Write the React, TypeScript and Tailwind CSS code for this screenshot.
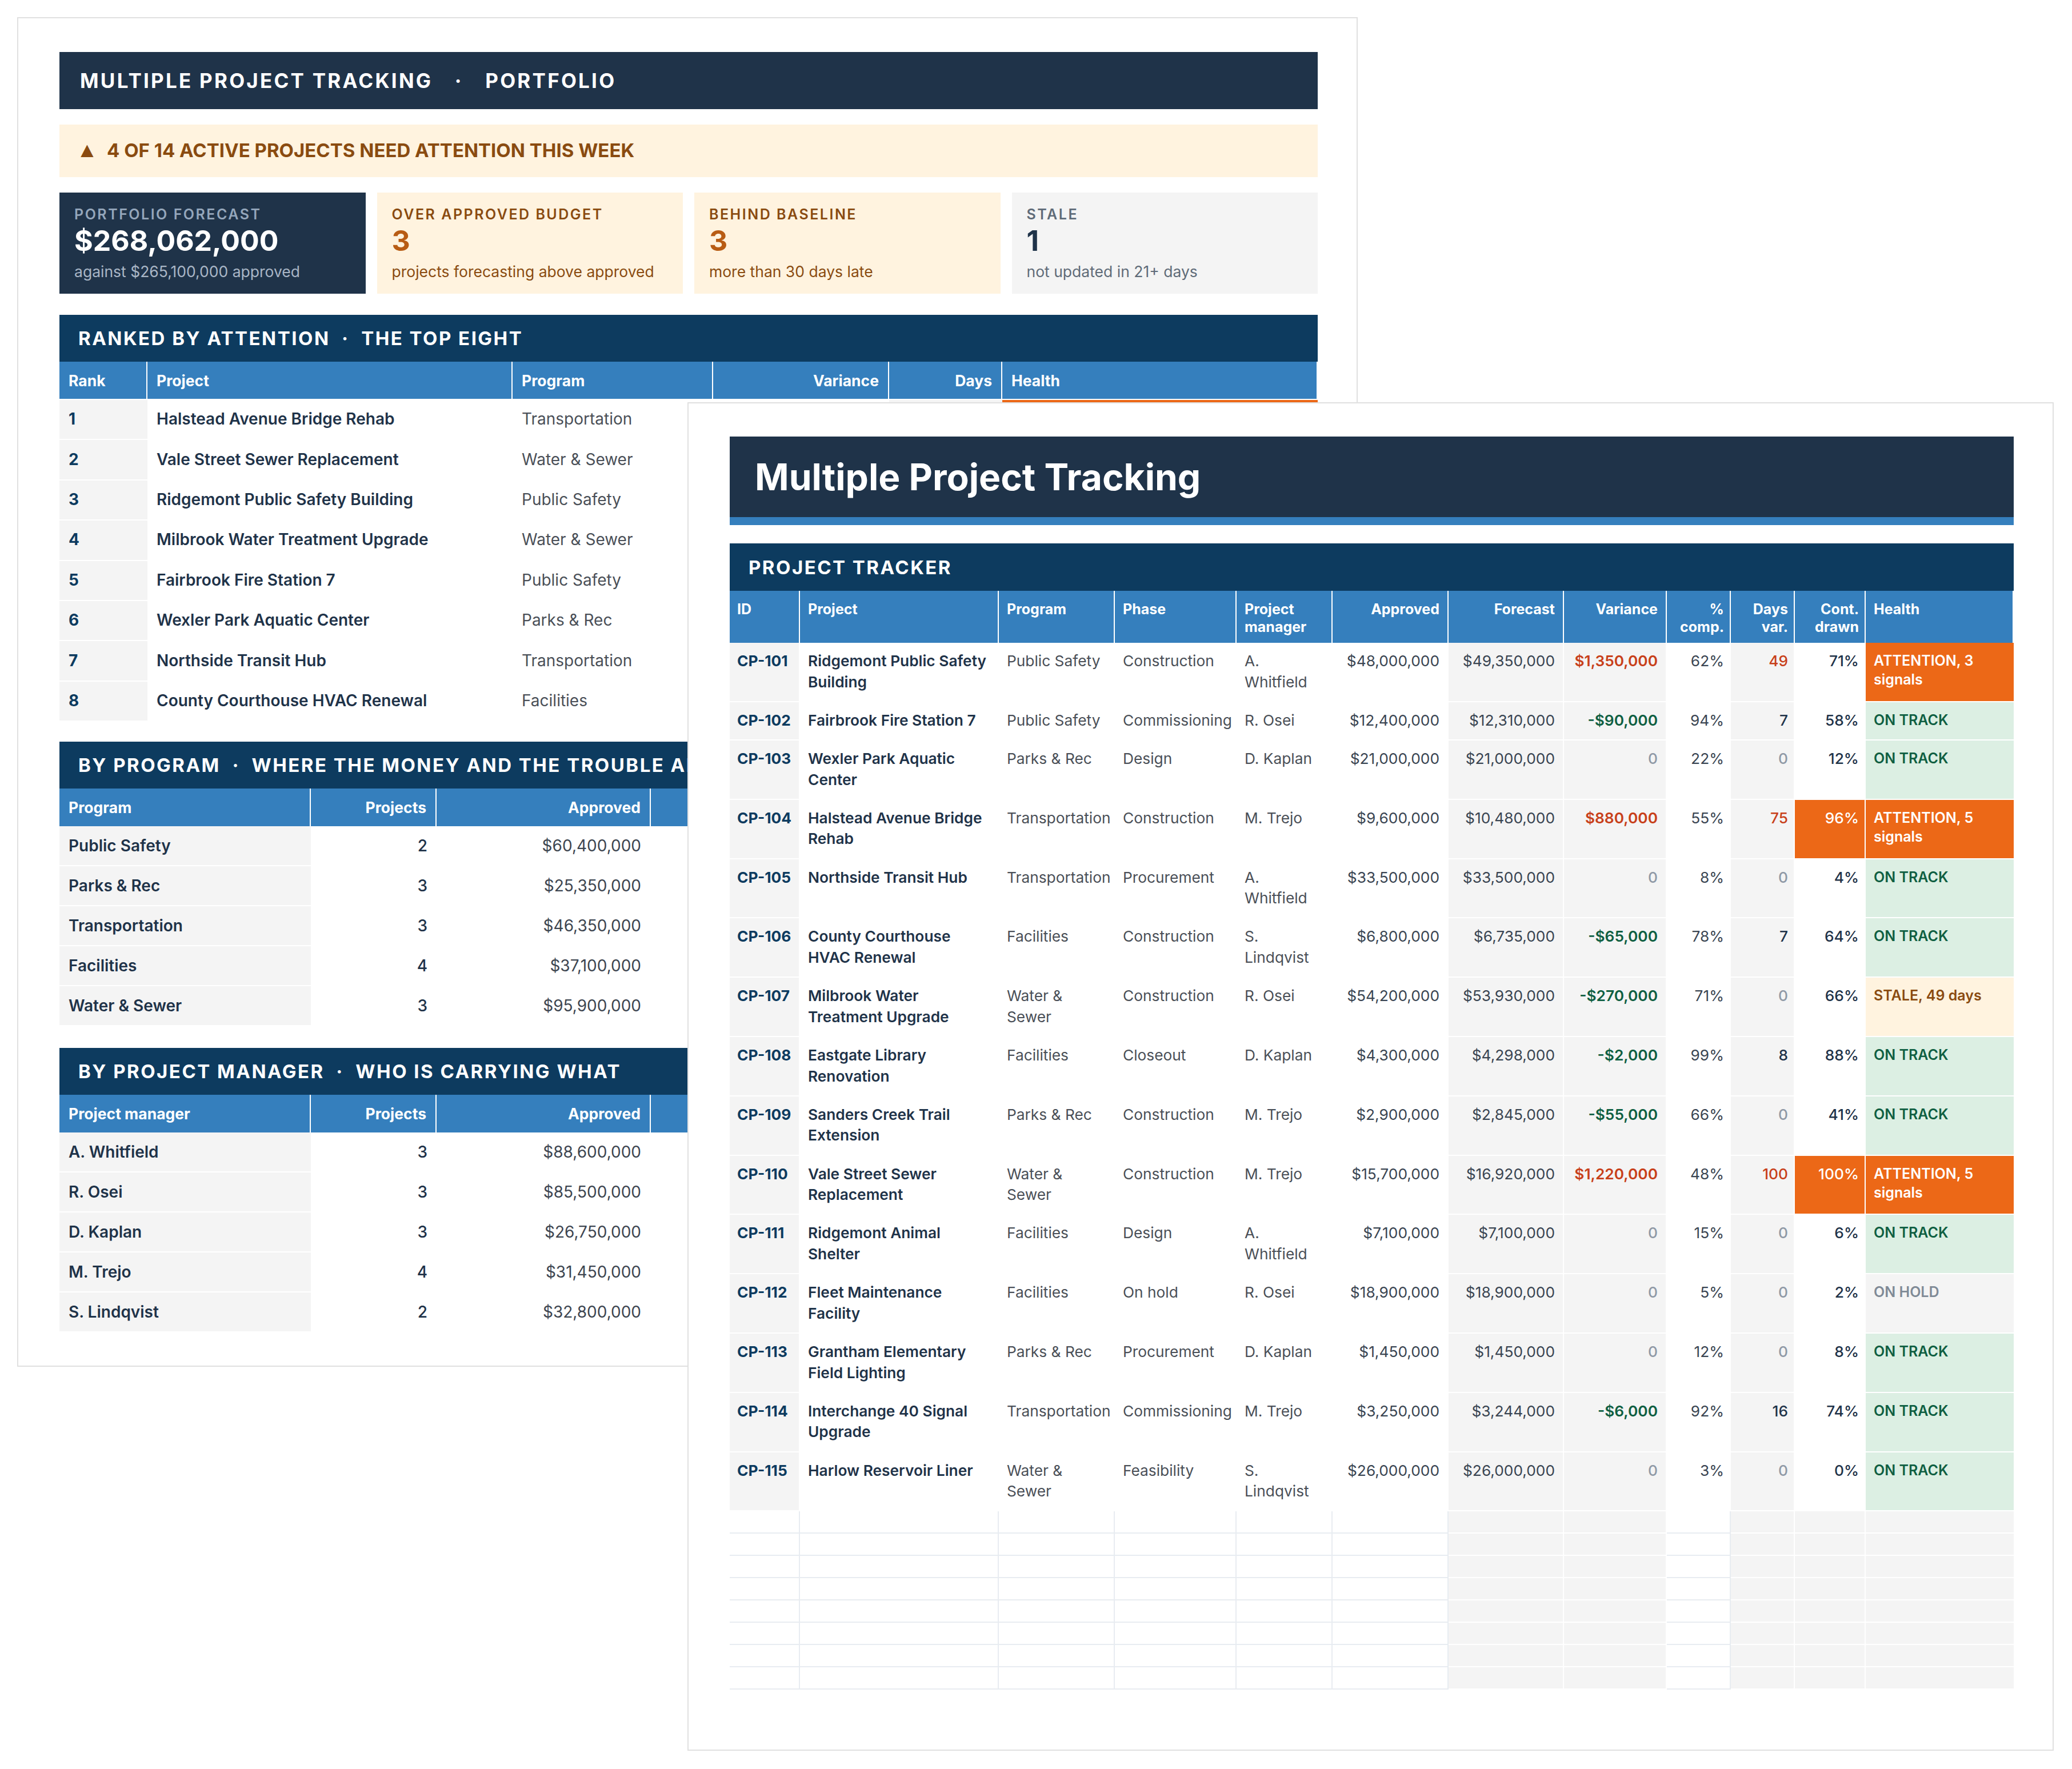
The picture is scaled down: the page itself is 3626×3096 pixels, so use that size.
import type { ReactNode } from 'react';

const FONT = "font-['Inter','Noto_Sans',sans-serif]";

type Tone = 'attention' | 'track' | 'stale' | 'hold';

const toneClass: Record<Tone, string> = {
  attention: 'bg-[#ec6817] text-white',
  track: 'bg-[#dcefe3] text-[#0f5f42]',
  stale: 'bg-[#fff3df] text-[#8a4b10]',
  hold: 'bg-[#f4f4f4] text-[#7f8a96]',
};

interface TrackerRow {
  id: string;
  project: string;
  program: string;
  phase: string;
  pm: string;
  approved: string;
  forecast: string;
  variance: string;
  comp: string;
  days: string;
  drawn: string;
  drawnHot?: boolean;
  health: string;
  tone: Tone;
}

const rows: TrackerRow[] = [
  { id: 'CP-101', project: 'Ridgemont Public Safety Building', program: 'Public Safety', phase: 'Construction', pm: 'A. Whitfield', approved: '$48,000,000', forecast: '$49,350,000', variance: '$1,350,000', comp: '62%', days: '49', drawn: '71%', health: 'ATTENTION, 3 signals', tone: 'attention' },
  { id: 'CP-102', project: 'Fairbrook Fire Station 7', program: 'Public Safety', phase: 'Commissioning', pm: 'R. Osei', approved: '$12,400,000', forecast: '$12,310,000', variance: '-$90,000', comp: '94%', days: '7', drawn: '58%', health: 'ON TRACK', tone: 'track' },
  { id: 'CP-103', project: 'Wexler Park Aquatic Center', program: 'Parks & Rec', phase: 'Design', pm: 'D. Kaplan', approved: '$21,000,000', forecast: '$21,000,000', variance: '0', comp: '22%', days: '0', drawn: '12%', health: 'ON TRACK', tone: 'track' },
  { id: 'CP-104', project: 'Halstead Avenue Bridge Rehab', program: 'Transportation', phase: 'Construction', pm: 'M. Trejo', approved: '$9,600,000', forecast: '$10,480,000', variance: '$880,000', comp: '55%', days: '75', drawn: '96%', drawnHot: true, health: 'ATTENTION, 5 signals', tone: 'attention' },
  { id: 'CP-105', project: 'Northside Transit Hub', program: 'Transportation', phase: 'Procurement', pm: 'A. Whitfield', approved: '$33,500,000', forecast: '$33,500,000', variance: '0', comp: '8%', days: '0', drawn: '4%', health: 'ON TRACK', tone: 'track' },
  { id: 'CP-106', project: 'County Courthouse HVAC Renewal', program: 'Facilities', phase: 'Construction', pm: 'S. Lindqvist', approved: '$6,800,000', forecast: '$6,735,000', variance: '-$65,000', comp: '78%', days: '7', drawn: '64%', health: 'ON TRACK', tone: 'track' },
  { id: 'CP-107', project: 'Milbrook Water Treatment Upgrade', program: 'Water & Sewer', phase: 'Construction', pm: 'R. Osei', approved: '$54,200,000', forecast: '$53,930,000', variance: '-$270,000', comp: '71%', days: '0', drawn: '66%', health: 'STALE, 49 days', tone: 'stale' },
  { id: 'CP-108', project: 'Eastgate Library Renovation', program: 'Facilities', phase: 'Closeout', pm: 'D. Kaplan', approved: '$4,300,000', forecast: '$4,298,000', variance: '-$2,000', comp: '99%', days: '8', drawn: '88%', health: 'ON TRACK', tone: 'track' },
  { id: 'CP-109', project: 'Sanders Creek Trail Extension', program: 'Parks & Rec', phase: 'Construction', pm: 'M. Trejo', approved: '$2,900,000', forecast: '$2,845,000', variance: '-$55,000', comp: '66%', days: '0', drawn: '41%', health: 'ON TRACK', tone: 'track' },
  { id: 'CP-110', project: 'Vale Street Sewer Replacement', program: 'Water & Sewer', phase: 'Construction', pm: 'M. Trejo', approved: '$15,700,000', forecast: '$16,920,000', variance: '$1,220,000', comp: '48%', days: '100', drawn: '100%', drawnHot: true, health: 'ATTENTION, 5 signals', tone: 'attention' },
  { id: 'CP-111', project: 'Ridgemont Animal Shelter', program: 'Facilities', phase: 'Design', pm: 'A. Whitfield', approved: '$7,100,000', forecast: '$7,100,000', variance: '0', comp: '15%', days: '0', drawn: '6%', health: 'ON TRACK', tone: 'track' },
  { id: 'CP-112', project: 'Fleet Maintenance Facility', program: 'Facilities', phase: 'On hold', pm: 'R. Osei', approved: '$18,900,000', forecast: '$18,900,000', variance: '0', comp: '5%', days: '0', drawn: '2%', health: 'ON HOLD', tone: 'hold' },
  { id: 'CP-113', project: 'Grantham Elementary Field Lighting', program: 'Parks & Rec', phase: 'Procurement', pm: 'D. Kaplan', approved: '$1,450,000', forecast: '$1,450,000', variance: '0', comp: '12%', days: '0', drawn: '8%', health: 'ON TRACK', tone: 'track' },
  { id: 'CP-114', project: 'Interchange 40 Signal Upgrade', program: 'Transportation', phase: 'Commissioning', pm: 'M. Trejo', approved: '$3,250,000', forecast: '$3,244,000', variance: '-$6,000', comp: '92%', days: '16', drawn: '74%', health: 'ON TRACK', tone: 'track' },
  { id: 'CP-115', project: 'Harlow Reservoir Liner', program: 'Water & Sewer', phase: 'Feasibility', pm: 'S. Lindqvist', approved: '$26,000,000', forecast: '$26,000,000', variance: '0', comp: '3%', days: '0', drawn: '0%', health: 'ON TRACK', tone: 'track' },
];

const ranked = [
  ['1', 'Halstead Avenue Bridge Rehab', 'Transportation', '$880,000', '75', 'ATTENTION, 5 signals', 'attention'],
  ['2', 'Vale Street Sewer Replacement', 'Water & Sewer', '$1,220,000', '100', 'ATTENTION, 5 signals', 'attention'],
  ['3', 'Ridgemont Public Safety Building', 'Public Safety', '$1,350,000', '49', 'ATTENTION, 3 signals', 'attention'],
  ['4', 'Milbrook Water Treatment Upgrade', 'Water & Sewer', '-$270,000', '0', 'STALE, 49 days', 'stale'],
  ['5', 'Fairbrook Fire Station 7', 'Public Safety', '-$90,000', '7', 'ON TRACK', 'track'],
  ['6', 'Wexler Park Aquatic Center', 'Parks & Rec', '0', '0', 'ON TRACK', 'track'],
  ['7', 'Northside Transit Hub', 'Transportation', '0', '0', 'ON TRACK', 'track'],
  ['8', 'County Courthouse HVAC Renewal', 'Facilities', '-$65,000', '7', 'ON TRACK', 'track'],
] as const;

const byProgram = [
  ['Public Safety', '2', '$60,400,000', '$61,660,000'],
  ['Parks & Rec', '3', '$25,350,000', '$25,295,000'],
  ['Transportation', '3', '$46,350,000', '$47,224,000'],
  ['Facilities', '4', '$37,100,000', '$37,033,000'],
  ['Water & Sewer', '3', '$95,900,000', '$96,850,000'],
];

const byManager = [
  ['A. Whitfield', '3', '$88,600,000', '$89,950,000'],
  ['R. Osei', '3', '$85,500,000', '$85,140,000'],
  ['D. Kaplan', '3', '$26,750,000', '$26,748,000'],
  ['M. Trejo', '4', '$31,450,000', '$33,489,000'],
  ['S. Lindqvist', '2', '$32,800,000', '$32,735,000'],
];

function varianceColor(v: string) {
  if (v === '0') return 'text-[#8f99a6] font-medium';
  return v.startsWith('-') ? 'text-[#0f5f42] font-semibold' : 'text-[#c8401a] font-semibold';
}

function daysColor(d: string) {
  if (d === '0') return 'text-[#8f99a6] font-medium';
  return Number(d) > 30 ? 'text-[#c8401a] font-medium' : 'text-[#1f3349] font-medium';
}

function SectionBar({ children, height = 'h-[82px]' }: { children: ReactNode; height?: string }) {
  return (
    <div className={`flex items-center whitespace-pre bg-[#0d3b5f] pl-[33px] pt-[2px] text-[33px] font-bold tracking-[0.075em] text-white ${height}`}>
      {children}
    </div>
  );
}

function Tile({ label, value, note, tone }: { label: string; value: string; note: string; tone: 'dark' | 'warn' | 'grey' }) {
  const box = { dark: 'bg-[#1f3349]', warn: 'bg-[#fff3df]', grey: 'bg-[#f4f4f4]' }[tone];
  const labelText = { dark: 'text-[#94a6bb]', warn: 'text-[#8a4b10]', grey: 'text-[#5f6b78]' }[tone];
  const valueText = { dark: 'text-white', warn: 'text-[#b85c14]', grey: 'text-[#1f3349]' }[tone];
  const noteText = { dark: 'text-[#a9b6c6]', warn: 'text-[#8a4b10]', grey: 'text-[#5f6b78]' }[tone];
  return (
    <div className={`h-[177px] pl-[26px] pt-[22px] ${box}`}>
      <div className={`text-[25px] font-semibold leading-[32px] tracking-[0.1em] ${labelText}`}>{label}</div>
      <div className={`text-[50px] font-bold leading-[60px] ${valueText}`}>{value}</div>
      <div className={`mt-[6px] text-[26.5px] leading-[36px] ${noteText}`}>{note}</div>
    </div>
  );
}

function RankedTable() {
  const th = 'h-[67px] border-r-2 border-b-2 border-white bg-[#357fbd] px-[16px] pt-[2px] text-[26.5px] font-bold text-white';
  const td = 'h-[70.4px] border-b-2 border-white px-[16px] pb-[2px] text-[28px] leading-[36px]';
  return (
    <table className="w-full table-fixed border-separate border-spacing-0">
      <colgroup>
        <col className="w-[154px]" />
        <col className="w-[639px]" />
        <col className="w-[351px]" />
        <col className="w-[308px]" />
        <col className="w-[198px]" />
        <col />
      </colgroup>
      <thead>
        <tr>
          <th className={`${th} text-left`}>Rank</th>
          <th className={`${th} text-left`}>Project</th>
          <th className={`${th} text-left`}>Program</th>
          <th className={`${th} text-right`}>Variance</th>
          <th className={`${th} text-right`}>Days</th>
          <th className={`${th} border-r-0 text-left`}>Health</th>
        </tr>
      </thead>
      <tbody>
        {ranked.map((r) => (
          <tr key={r[0]}>
            <td className={`${td} bg-[#f4f4f4] font-bold text-[#0d3b5f]`}>{r[0]}</td>
            <td className={`${td} font-semibold text-[#1f3349]`}>{r[1]}</td>
            <td className={`${td} text-[#4a4f57]`}>{r[2]}</td>
            <td className={`${td} text-right ${varianceColor(r[3])}`}>{r[3]}</td>
            <td className={`${td} bg-[#f4f4f4] text-right ${daysColor(r[4])}`}>{r[4]}</td>
            <td className={`${td} font-semibold ${toneClass[r[6]]}`}>{r[5]}</td>
          </tr>
        ))}
      </tbody>
    </table>
  );
}

function RollupTable({ first, data }: { first: string; data: string[][] }) {
  const th = 'h-[66px] border-r-2 border-white bg-[#357fbd] px-[16px] pt-[1px] text-[26.5px] font-bold text-white';
  const td = 'h-[70px] border-b-2 border-white px-[16px] text-[28px] leading-[36px]';
  return (
    <table className="w-full table-fixed border-separate border-spacing-0">
      <colgroup>
        <col className="w-[440px]" />
        <col className="w-[220px]" />
        <col className="w-[375px]" />
        <col className="w-[375px]" />
        <col />
      </colgroup>
      <thead>
        <tr>
          <th className={`${th} text-left`}>{first}</th>
          <th className={`${th} text-right`}>Projects</th>
          <th className={`${th} text-right`}>Approved</th>
          <th className={`${th} text-right`}>Forecast</th>
          <th className={`${th} border-r-0 text-right`}>Variance</th>
        </tr>
      </thead>
      <tbody>
        {data.map((r) => (
          <tr key={r[0]}>
            <td className={`${td} bg-[#f4f4f4] font-semibold text-[#1f3349]`}>{r[0]}</td>
            <td className={`${td} text-right font-medium text-[#1f3349]`}>{r[1]}</td>
            <td className={`${td} !pr-[17px] text-right text-[#3d4550]`}>{r[2]}</td>
            <td className={`${td} text-right text-[#3d4550]`}>{r[3]}</td>
            <td className={td} />
          </tr>
        ))}
      </tbody>
    </table>
  );
}

function TrackerTable() {
  const th = 'h-[91px] border-r-2 border-white bg-[#357fbd] px-[14px] pb-[12px] pt-[17px] align-top text-[25px] font-bold leading-[31px] text-white';
  const thNarrow = 'h-[91px] border-r-2 border-white bg-[#357fbd] pl-[10px] pr-[10px] pb-[12px] pt-[17px] align-top text-right text-[25px] font-bold leading-[31px] text-white';
  const td = 'border-r-2 border-b-2 border-white px-[14px] pb-[14.8px] pt-[14px] align-top text-[26.3px] leading-[36.5px]';
  const tdNarrow = 'border-r-2 border-b-2 border-white px-[10px] pb-[14.8px] pt-[14px] align-top text-right text-[26.3px] leading-[36.5px]';
  const tone = 'bg-[#f4f4f4]';
  return (
    <table className="w-full table-fixed border-separate border-spacing-0">
      <colgroup>
        <col className="w-[123px]" />
        <col className="w-[348px]" />
        <col className="w-[203px]" />
        <col className="w-[213px]" />
        <col className="w-[168px]" />
        <col className="w-[203px]" />
        <col className="w-[202px]" />
        <col className="w-[180px]" />
        <col className="w-[112px]" />
        <col className="w-[112px]" />
        <col className="w-[124px]" />
        <col />
      </colgroup>
      <thead>
        <tr>
          <th className={`${th} pl-[13px] text-left`}>ID</th>
          <th className={`${th} text-left`}>Project</th>
          <th className={`${th} text-left`}>Program</th>
          <th className={`${th} text-left`}>Phase</th>
          <th className={`${th} text-left`}>Project manager</th>
          <th className={`${th} text-right`}>Approved</th>
          <th className={`${th} text-right`}>Forecast</th>
          <th className={`${th} text-right`}>Variance</th>
          <th className={thNarrow}>% comp.</th>
          <th className={thNarrow}>Days var.</th>
          <th className={thNarrow}>Cont. drawn</th>
          <th className={`${th} border-r-0 text-left`}>Health</th>
        </tr>
      </thead>
      <tbody>
        {rows.map((r) => (
          <tr key={r.id}>
            <td className={`${td} ${tone} whitespace-nowrap !pl-[13px] !pr-0 font-bold text-[#0d3b5f]`}>{r.id}</td>
            <td className={`${td} font-semibold text-[#1f3349]`}>{r.project}</td>
            <td className={`${td} text-[#4a4f57]`}>{r.program}</td>
            <td className={`${td} text-[#4a4f57]`}>{r.phase}</td>
            <td className={`${td} text-[#4a4f57]`}>{r.pm}</td>
            <td className={`${td} text-right text-[#3a4552]`}>{r.approved}</td>
            <td className={`${td} ${tone} text-right text-[#3a4552]`}>{r.forecast}</td>
            <td className={`${td} ${tone} text-right ${varianceColor(r.variance)}`}>{r.variance}</td>
            <td className={`${tdNarrow} text-[#3a4552]`}>{r.comp}</td>
            <td className={`${tdNarrow} ${tone} ${daysColor(r.days)}`}>{r.days}</td>
            <td className={`${tdNarrow} font-medium ${r.drawnHot ? 'bg-[#ec6817] text-white' : 'text-[#1f3349]'}`}>{r.drawn}</td>
            <td className={`border-b-2 border-white px-[14px] pb-[14px] pt-[15px] align-top text-[25px] font-semibold leading-[33px] ${toneClass[r.tone]}`}>{r.health}</td>
          </tr>
        ))}
        {Array.from({ length: 8 }, (_, i) => (
          <tr key={i} className="h-[39px]">
            {[0, 1, 2, 3, 4, 5].map((c) => (
              <td key={c} className="border-r-2 border-b-2 border-[#e8ecf1]" />
            ))}
            <td className="border-r-2 border-b-2 border-white bg-[#f4f4f4]" />
            <td className="border-r-2 border-b-2 border-white bg-[#f4f4f4]" />
            <td className="border-r-2 border-b-2 border-[#e8ecf1]" />
            <td className="border-r-2 border-b-2 border-white bg-[#f4f4f4]" />
            <td className="border-r-2 border-b-2 border-white bg-[#f4f4f4]" />
            <td className="border-b-2 border-white bg-[#f4f4f4]" />
          </tr>
        ))}
      </tbody>
    </table>
  );
}

export default function App() {
  return (
    <div className={`relative h-[3096px] w-[3626px] overflow-hidden bg-white ${FONT}`}>
      {/* back sheet: portfolio summary */}
      <section className="absolute left-[30px] top-[30px] h-[2362px] w-[2346px] overflow-hidden border-2 border-[#e0e0e0] bg-white pl-[72px] pr-[68px] pt-[59px]">
        <div className="flex h-[100px] items-center whitespace-pre bg-[#1f3349] pl-[36px] text-[35px] font-bold tracking-[0.092em] text-white">
          MULTIPLE PROJECT TRACKING   <span className="mx-[4px]">·</span>   PORTFOLIO
        </div>
        <div className="mt-[27px] flex h-[92px] items-center bg-[#fff3df] pl-[36px] text-[33px] font-bold text-[#8a4b10]">
          <span className="w-[47px]">
            <span className="inline-block origin-left scale-x-[0.85] text-[28px]">▲</span>
          </span>
          <span>4 OF 14 ACTIVE PROJECTS NEED ATTENTION THIS WEEK</span>
        </div>
        <div className="mt-[27px] grid grid-cols-4 gap-[20px]">
          <Tile tone="dark" label="PORTFOLIO FORECAST" value="$268,062,000" note="against $265,100,000 approved" />
          <Tile tone="warn" label="OVER APPROVED BUDGET" value="3" note="projects forecasting above approved" />
          <Tile tone="warn" label="BEHIND BASELINE" value="3" note="more than 30 days late" />
          <Tile tone="grey" label="STALE" value="1" note="not updated in 21+ days" />
        </div>
        <div className="mt-[37px]">
          <SectionBar>RANKED BY ATTENTION  ·  THE TOP EIGHT</SectionBar>
          <RankedTable />
        </div>
        <div className="mt-[35px]">
          <SectionBar>BY PROGRAM  ·  WHERE THE MONEY AND THE TROUBLE ARE</SectionBar>
          <RollupTable first="Program" data={byProgram} />
        </div>
        <div className="mt-[38px]">
          <SectionBar>BY PROJECT MANAGER  ·  WHO IS CARRYING WHAT</SectionBar>
          <RollupTable first="Project manager" data={byManager} />
        </div>
      </section>

      {/* front sheet: full tracker */}
      <section className="absolute left-[1203px] top-[704px] h-[2360px] w-[2391px] border-2 border-[#e0e0e0] bg-white pl-[72px] pr-[68px] pt-[58px]">
        <div className="flex h-[155px] items-center border-b-[14px] border-[#357fbd] bg-[#1f3349] pl-[44px] text-[64px] font-bold text-white">
          Multiple Project Tracking
        </div>
        <div className="mt-[32px]">
          <SectionBar height="h-[83px]">PROJECT TRACKER</SectionBar>
          <TrackerTable />
        </div>
      </section>
    </div>
  );
}
